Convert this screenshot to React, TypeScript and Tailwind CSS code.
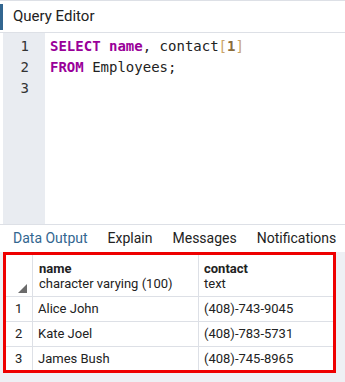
import React from "react";

const rows = [
  { n: "1", name: "Alice John", contact: "(408)-743-9045" },
  { n: "2", name: "Kate Joel", contact: "(408)-783-5731" },
  { n: "3", name: "James Bush", contact: "(408)-745-8965" },
];

export default function App() {
  return (
    <div
      className="w-[345px] h-[382px] bg-white overflow-hidden flex flex-col text-[#222]"
      style={{ fontFamily: "Roboto, 'Liberation Sans', sans-serif" }}
    >
      {/* Header */}
      <div className="h-[33px] shrink-0 border-t border-b border-[#dde0e6] flex items-center">
        <div className="w-[3px] h-[26px] bg-[#326690]" />
        <span className="ml-[10px] text-[15px] leading-none">Query Editor</span>
      </div>

      {/* Editor */}
      <div className="h-[191px] shrink-0 flex">
        <div className="w-[3px]" />
        <div className="w-[42px] bg-[#e9ecf1] pt-[3px] pr-[16px] text-right text-[#333] text-[14px] leading-[21px]" style={{ fontFamily: "'DejaVu Sans Mono', monospace" }}>
          <div>1</div>
          <div>2</div>
          <div>3</div>
        </div>
        <div className="pl-[5px] pt-[3px] text-[14px] leading-[21px] text-[#222] whitespace-pre" style={{ fontFamily: "'DejaVu Sans Mono', monospace" }}>
          <div>
            <span className="font-bold text-[#990099]">SELECT</span>{" "}
            <span className="font-bold text-[#990099]">name</span>, contact
            <span className="text-[#c9a36a]">[</span>
            <span className="font-bold text-[#8a6d3b]">1</span>
            <span className="text-[#c9a36a]">]</span>
          </div>
          <div>
            <span className="font-bold text-[#990099]">FROM</span> Employees;
          </div>
          <div>&nbsp;</div>
        </div>
      </div>

      {/* Tabs */}
      <div className="h-[28px] shrink-0 border-t border-[#dde0e6] flex items-center pl-[3px] text-[14px] whitespace-nowrap">
        <span className="shrink-0 px-[10px] text-[#326690]">Data Output</span>
        <span className="shrink-0 px-[10px]">Explain</span>
        <span className="shrink-0 px-[10px]">Messages</span>
        <span className="shrink-0 px-[10px]">Notifications</span>
      </div>

      {/* Results */}
      <div className="flex-1 bg-[#eef0f4] flex items-start pl-[3px]">
        <div className="w-[333px] border-[3px] border-[#ee0000] bg-white text-[13px]">
          <div className="flex h-[42px] border-b border-[#dde0e6]">
            <div className="w-[27px] shrink-0 border-r border-[#dde0e6] relative">
              <div
                className="absolute right-[5px] bottom-[3px] w-0 h-0 border-l-[9px] border-l-transparent border-b-[9px] border-b-[#6b6b6b]"
              />
            </div>
            <div className="w-[166px] shrink-0 border-r border-[#dde0e6] pl-[6px] pt-[6px] leading-[15px]">
              <div className="font-bold">name</div>
              <div>character varying (100)</div>
            </div>
            <div className="flex-1 pl-[5px] pt-[6px] leading-[15px]">
              <div className="font-bold">contact</div>
              <div>text</div>
            </div>
          </div>
          {rows.map((r, i) => (
            <div
              key={r.n}
              className={
                i < 2
                  ? "flex h-[25px] items-center border-b border-[#dde0e6]"
                  : "flex h-[23px] items-center"
              }
            >
              <div className="w-[27px] h-full shrink-0 border-r border-[#dde0e6] pl-[9px] flex items-center">{r.n}</div>
              <div className="w-[166px] h-full shrink-0 border-r border-[#dde0e6] pl-[5px] flex items-center">{r.name}</div>
              <div className="flex-1 pl-[5px]">{r.contact}</div>
            </div>
          ))}
        </div>
      </div>
    </div>
  );
}
